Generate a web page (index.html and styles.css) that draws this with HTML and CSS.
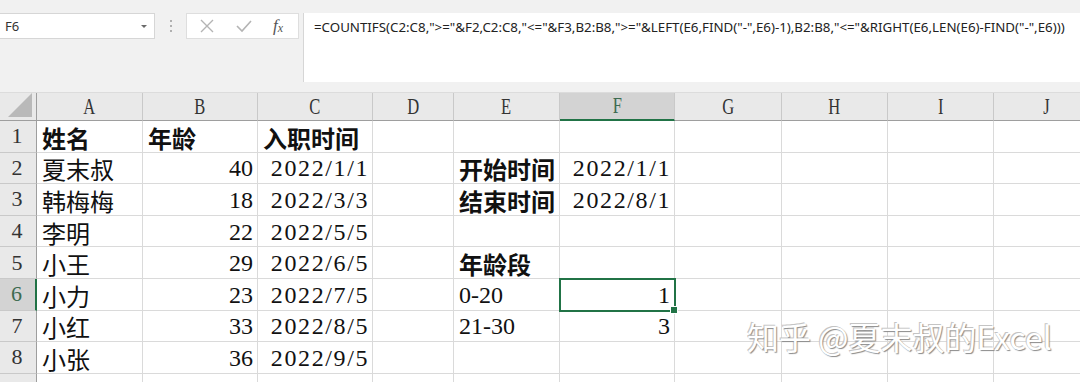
FILE: index.html
```html
<!DOCTYPE html>
<html lang="zh-CN">
<head>
    <meta charset="UTF-8">
    <title>COUNTIFS</title>
    <link rel="stylesheet" href="styles.css">
</head>
<body>
    <div class="toolbar">
        <div class="namebox">
            <span>F6</span>
            <svg class="drop" width="8" height="5" viewBox="0 0 8 5"><path d="M1 1h6L4 4z" fill="#6a6a6a"/></svg>
        </div>
        <div class="grip"><i></i><i></i><i></i></div>
        <div class="fxbox">
            <svg width="16" height="16" viewBox="0 0 16 16"><path d="M2 2l12 12M14 2L2 14" stroke="#b4b4b4" stroke-width="1.4" fill="none"/></svg>
            <svg width="18" height="16" viewBox="0 0 18 16"><path d="M2 8l5 5L16 3" stroke="#b4b4b4" stroke-width="1.6" fill="none"/></svg>
            <span class="fx">f<sub>x</sub></span>
        </div>
        <div class="formula">=COUNTIFS(C2:C8,"&gt;="&amp;F2,C2:C8,"&lt;="&amp;F3,B2:B8,"&gt;="&amp;LEFT(E6,FIND("-",E6)-1),B2:B8,"&lt;="&amp;RIGHT(E6,LEN(E6)-FIND("-",E6)))</div>
    </div>

    <div class="sheet">
        <div class="hd corner"><svg width="26" height="26" viewBox="0 0 26 26"><path d="M25 1V25H1z" fill="#b9b9b9"/></svg></div>
        <div class="hd col"><span>A</span></div>
        <div class="hd col"><span>B</span></div>
        <div class="hd col"><span>C</span></div>
        <div class="hd col"><span>D</span></div>
        <div class="hd col"><span>E</span></div>
        <div class="hd col sel"><span>F</span></div>
        <div class="hd col"><span>G</span></div>
        <div class="hd col"><span>H</span></div>
        <div class="hd col"><span>I</span></div>
        <div class="hd col"><span>J</span></div>
        <div class="hd col"></div>

        <div class="hd row">1</div>
        <div class="c b">姓名</div><div class="c b">年龄</div><div class="c b">入职时间</div>
        <div class="c"></div><div class="c"></div><div class="c"></div><div class="c"></div><div class="c"></div><div class="c"></div><div class="c"></div><div class="c"></div>

        <div class="hd row">2</div>
        <div class="c">夏末叔</div><div class="c r">40</div><div class="c r d">2022/1/1</div>
        <div class="c"></div><div class="c b">开始时间</div><div class="c r d">2022/1/1</div><div class="c"></div><div class="c"></div><div class="c"></div><div class="c"></div><div class="c"></div>

        <div class="hd row">3</div>
        <div class="c">韩梅梅</div><div class="c r">18</div><div class="c r d">2022/3/3</div>
        <div class="c"></div><div class="c b">结束时间</div><div class="c r d">2022/8/1</div><div class="c"></div><div class="c"></div><div class="c"></div><div class="c"></div><div class="c"></div>

        <div class="hd row">4</div>
        <div class="c">李明</div><div class="c r">22</div><div class="c r d">2022/5/5</div>
        <div class="c"></div><div class="c"></div><div class="c"></div><div class="c"></div><div class="c"></div><div class="c"></div><div class="c"></div><div class="c"></div>

        <div class="hd row">5</div>
        <div class="c">小王</div><div class="c r">29</div><div class="c r d">2022/6/5</div>
        <div class="c"></div><div class="c b">年龄段</div><div class="c"></div><div class="c"></div><div class="c"></div><div class="c"></div><div class="c"></div><div class="c"></div>

        <div class="hd row sel">6</div>
        <div class="c">小力</div><div class="c r">23</div><div class="c r d">2022/7/5</div>
        <div class="c"></div><div class="c">0-20</div><div class="c r active">1</div><div class="c"></div><div class="c"></div><div class="c"></div><div class="c"></div><div class="c"></div>

        <div class="hd row">7</div>
        <div class="c">小红</div><div class="c r">33</div><div class="c r d">2022/8/5</div>
        <div class="c"></div><div class="c">21-30</div><div class="c r">3</div><div class="c"></div><div class="c"></div><div class="c"></div><div class="c"></div><div class="c"></div>

        <div class="hd row">8</div>
        <div class="c">小张</div><div class="c r">36</div><div class="c r d">2022/9/5</div>
        <div class="c"></div><div class="c"></div><div class="c"></div><div class="c"></div><div class="c"></div><div class="c"></div><div class="c"></div><div class="c"></div>

        <div class="hd row"></div>
        <div class="c"></div><div class="c"></div><div class="c"></div><div class="c"></div><div class="c"></div><div class="c"></div><div class="c"></div><div class="c"></div><div class="c"></div><div class="c"></div><div class="c"></div>

        <div class="watermark">知乎 @夏末叔的Excel</div>
    </div>
</body>
</html>
```

FILE: styles.css
```css
body {
    margin: 0;
    height: 382px;
    overflow: hidden;
    background: #fff;
    font-family: "Liberation Serif", "Noto Sans CJK SC", serif;
}
.toolbar {
    display: flex;
    align-items: flex-start;
    height: 93px;
    padding-top: 13px;
    box-sizing: border-box;
    background: #f1f1f1;
    border-bottom: 1px solid #dcdcdc;
}
.namebox {
    display: flex;
    align-items: center;
    justify-content: space-between;
    width: 155px;
    height: 26px;
    box-sizing: border-box;
    padding: 0 6px 0 5px;
    background: #fff;
    border: 1px solid #d6d6d6;
    border-left: none;
    font-family: "Noto Sans", "Liberation Sans", sans-serif;
    font-size: 13px;
    color: #333;
}
.grip {
    display: flex;
    flex-direction: column;
    gap: 3px;
    width: 31px;
    height: 26px;
    align-items: center;
    justify-content: center;
}
.grip i {
    width: 2px;
    height: 2px;
    background: #b0b0b0;
}
.fxbox {
    display: flex;
    align-items: center;
    gap: 20px;
    width: 113px;
    height: 26px;
    box-sizing: border-box;
    padding-left: 12px;
    background: #fff;
    border: 1px solid #dedede;
}
.fx {
    font-family: "Liberation Serif", serif;
    font-style: italic;
    font-size: 17px;
    color: #555;
}
.fx sub {
    font-size: 12px;
    vertical-align: -1px;
}
.formula {
    flex: 1;
    height: 69px;
    margin-left: 4px;
    box-sizing: border-box;
    padding: 5px 0 0 10px;
    background: #fff;
    border-left: 1px solid #d6d6d6;
    font-family: "Noto Sans", "Liberation Sans", sans-serif;
    font-size: 13.3px;
    color: #222;
    white-space: nowrap;
}
.sheet {
    position: relative;
    display: grid;
    grid-template-columns: 37px 106px 115px 115px 81px 106px 115px 107px 106px 106px 106px 1fr;
    grid-template-rows: 28px repeat(9, 31.6px);
}
.hd {
    display: flex;
    align-items: center;
    justify-content: center;
    box-sizing: border-box;
    background: #e9e9e9;
    color: #333;
    border-right: 1px solid #c9c9c9;
    border-bottom: 1px solid #c9c9c9;
}
.corner {
    justify-content: flex-end;
    align-items: flex-end;
    padding: 0 3px 2px 0;
    border-bottom: 1px solid #9e9e9e;
    border-right: 1px solid #9e9e9e;
}
.col {
    border-bottom: 1px solid #9e9e9e;
    font-size: 23px;
}
.col span {
    display: inline-block;
    transform: scaleX(0.72);
}
.col.sel {
    background: #d3d3d3;
    color: #3d6b50;
    border-bottom: 2px solid #217346;
}
.row {
    border-right: 1px solid #9e9e9e;
    font-size: 22px;
    padding-right: 2px;
}
.row.sel {
    background: #d3d3d3;
    color: #3d6b50;
    border-right: 2px solid #217346;
}
.c {
    display: flex;
    align-items: center;
    box-sizing: border-box;
    padding: 2px 5px 0;
    border-right: 1px solid #dadada;
    border-bottom: 1px solid #dadada;
    font-size: 24px;
    color: #111;
    white-space: nowrap;
}
.c.r {
    justify-content: flex-end;
    padding-right: 4px;
}
.c.d {
    letter-spacing: 1.6px;
    padding-right: 3px;
}
.c.b {
    font-weight: 600;
}
.c.active {
    position: relative;
    outline: 2px solid #217346;
    outline-offset: -1px;
}
.c.active::after {
    content: "";
    position: absolute;
    right: -4px;
    bottom: -4px;
    width: 6px;
    height: 6px;
    background: #217346;
    border: 1px solid #fff;
}
.watermark {
    position: absolute;
    left: 747px;
    top: 220px;
    font-family: "Noto Sans CJK SC", "Liberation Sans", sans-serif;
    font-size: 32px;
    color: #fff;
    text-shadow: 1px 1px 1px #8a8a8a, -1px -1px 0 #c4c4c4;
    white-space: nowrap;
}
```
